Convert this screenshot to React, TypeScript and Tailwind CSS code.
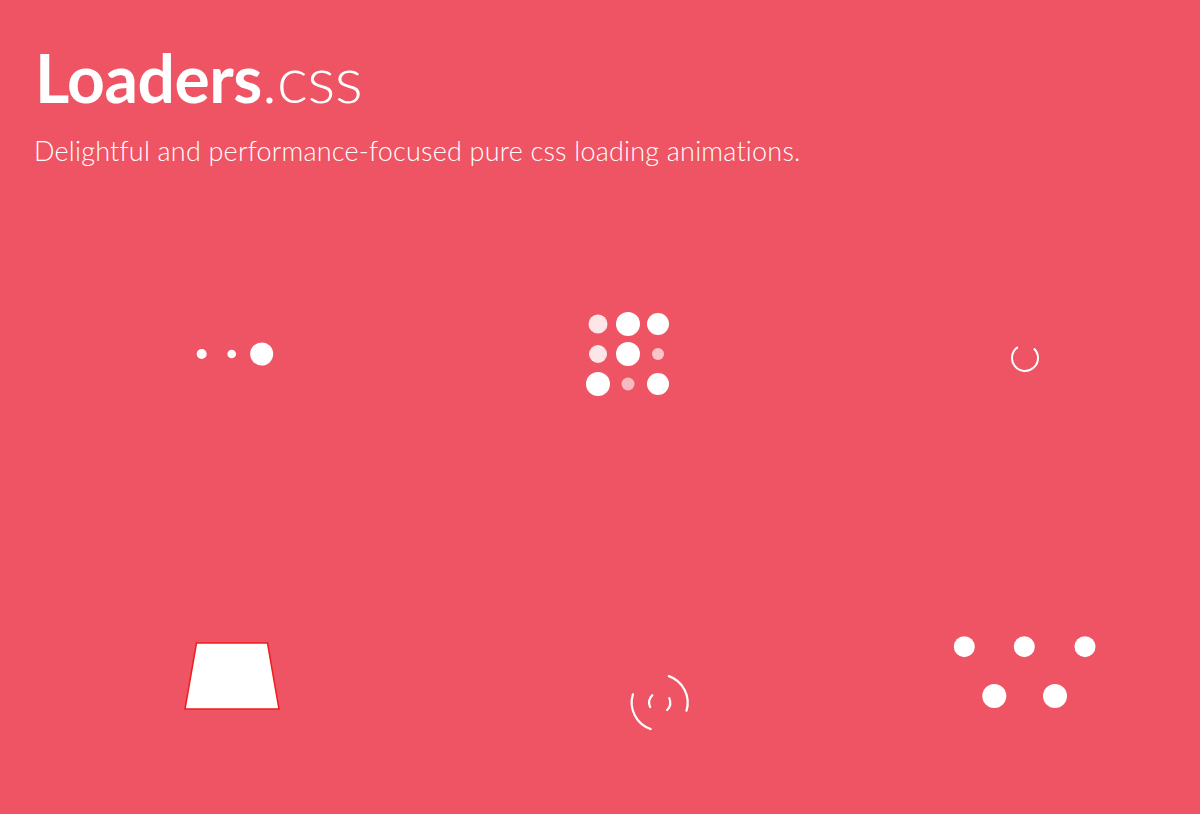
import React from "react";

// helpers for drawing arcs, angles in degrees (svg: clockwise from +x)
function arc(cx: number, cy: number, r: number, a0: number, a1: number) {
  const rad = (a: number) => (a * Math.PI) / 180;
  const x0 = cx + r * Math.cos(rad(a0));
  const y0 = cy + r * Math.sin(rad(a0));
  const x1 = cx + r * Math.cos(rad(a1));
  const y1 = cy + r * Math.sin(rad(a1));
  const large = a1 - a0 > 180 ? 1 : 0;
  return `M ${x0.toFixed(2)} ${y0.toFixed(2)} A ${r} ${r} 0 ${large} 1 ${x1.toFixed(2)} ${y1.toFixed(2)}`;
}

function Box({ w, h, children }: { w: number; h: number; children: React.ReactNode }) {
  return (
    <svg width={w} height={h} viewBox={`${-w / 2} ${-h / 2} ${w} ${h}`}>
      {children}
    </svg>
  );
}

function BallPulse() {
  return (
    <Box w={100} h={40}>
      <circle cx={-30.3} cy={0} r={5} fill="#fff" />
      <circle cx={-0.3} cy={0} r={4.3} fill="#fff" />
      <circle cx={29.7} cy={0} r={11.5} fill="#fff" />
    </Box>
  );
}

const grid = [
  { x: -30, y: -30, r: 9.5, o: 0.85 },
  { x: 0, y: -30, r: 12, o: 1 },
  { x: 30, y: -30, r: 11, o: 1 },
  { x: -30, y: 0, r: 9, o: 0.85 },
  { x: 0, y: 0, r: 12, o: 1 },
  { x: 30, y: 0, r: 6, o: 0.65 },
  { x: -30, y: 30, r: 12, o: 1 },
  { x: 0, y: 30, r: 6.5, o: 0.6 },
  { x: 30, y: 30, r: 11, o: 1 },
];

function BallGridPulse() {
  return (
    <Box w={100} h={100}>
      {grid.map((b, i) => (
        <circle key={i} cx={b.x} cy={b.y} r={b.r} fill="#fff" fillOpacity={b.o} />
      ))}
    </Box>
  );
}

function BallClipRotate() {
  return (
    <Box w={50} h={50}>
      <path d={arc(1, 4, 13, -47, 237)} fill="none" stroke="#fff" strokeWidth={2} />
    </Box>
  );
}

function SquareSpin() {
  return (
    <Box w={110} h={80}>
      <polygon
        points="-35.5,-33 35.5,-33 47,33 -47,33"
        fill="#fff"
        stroke="#f01c1c"
        strokeWidth={1.5}
      />
    </Box>
  );
}

function RingRotate() {
  const cx = 31.7;
  const cy = 26.6;
  return (
    <Box w={140} h={140}>
      <g fill="none" stroke="#fff" strokeWidth={2.2} strokeLinecap="round">
        <path d={arc(cx, cy, 28, 109, 197)} />
        <path d={arc(cx, cy, 28, -71, 17)} />
        <path d={arc(cx, cy, 10.5, 155, 225)} />
        <path d={arc(cx, cy, 10.5, -25, 45)} />
      </g>
    </Box>
  );
}

function BallPulseRise() {
  return (
    <Box w={160} h={90}>
      <circle cx={-59.7} cy={-29.3} r={10.5} fill="#fff" />
      <circle cx={0.3} cy={-29.3} r={10.5} fill="#fff" />
      <circle cx={61} cy={-29.3} r={10.5} fill="#fff" />
      <circle cx={-29.7} cy={20} r={12} fill="#fff" />
      <circle cx={31} cy={20} r={12} fill="#fff" />
    </Box>
  );
}

const loaders = [BallPulse, BallGridPulse, BallClipRotate, SquareSpin, RingRotate, BallPulseRise];

export default function App() {
  return (
    <div
      className="h-[814px] w-full overflow-hidden bg-[#ee5463] text-white"
      style={{ fontFamily: "Lato, 'Open Sans', sans-serif" }}
    >
      <header className="pl-[35px] pt-[45px]">
        <h1 className="text-[66px] leading-none tracking-[-0.5px]">
          <span className="font-bold">Loaders</span>
          <span className="font-light">.css</span>
        </h1>
        <p className="-ml-px mt-[26px] text-[27px] font-light leading-none tracking-[0.2px]">
          Delightful and performance-focused pure css loading animations.
        </p>
      </header>

      <main className="mt-[29px] grid grid-cols-[396px_396px_396px] grid-rows-[322px_322px] pl-[34px]">
        {loaders.map((L, i) => (
          <div key={i} className="flex items-center justify-center">
            <L />
          </div>
        ))}
      </main>
    </div>
  );
}
